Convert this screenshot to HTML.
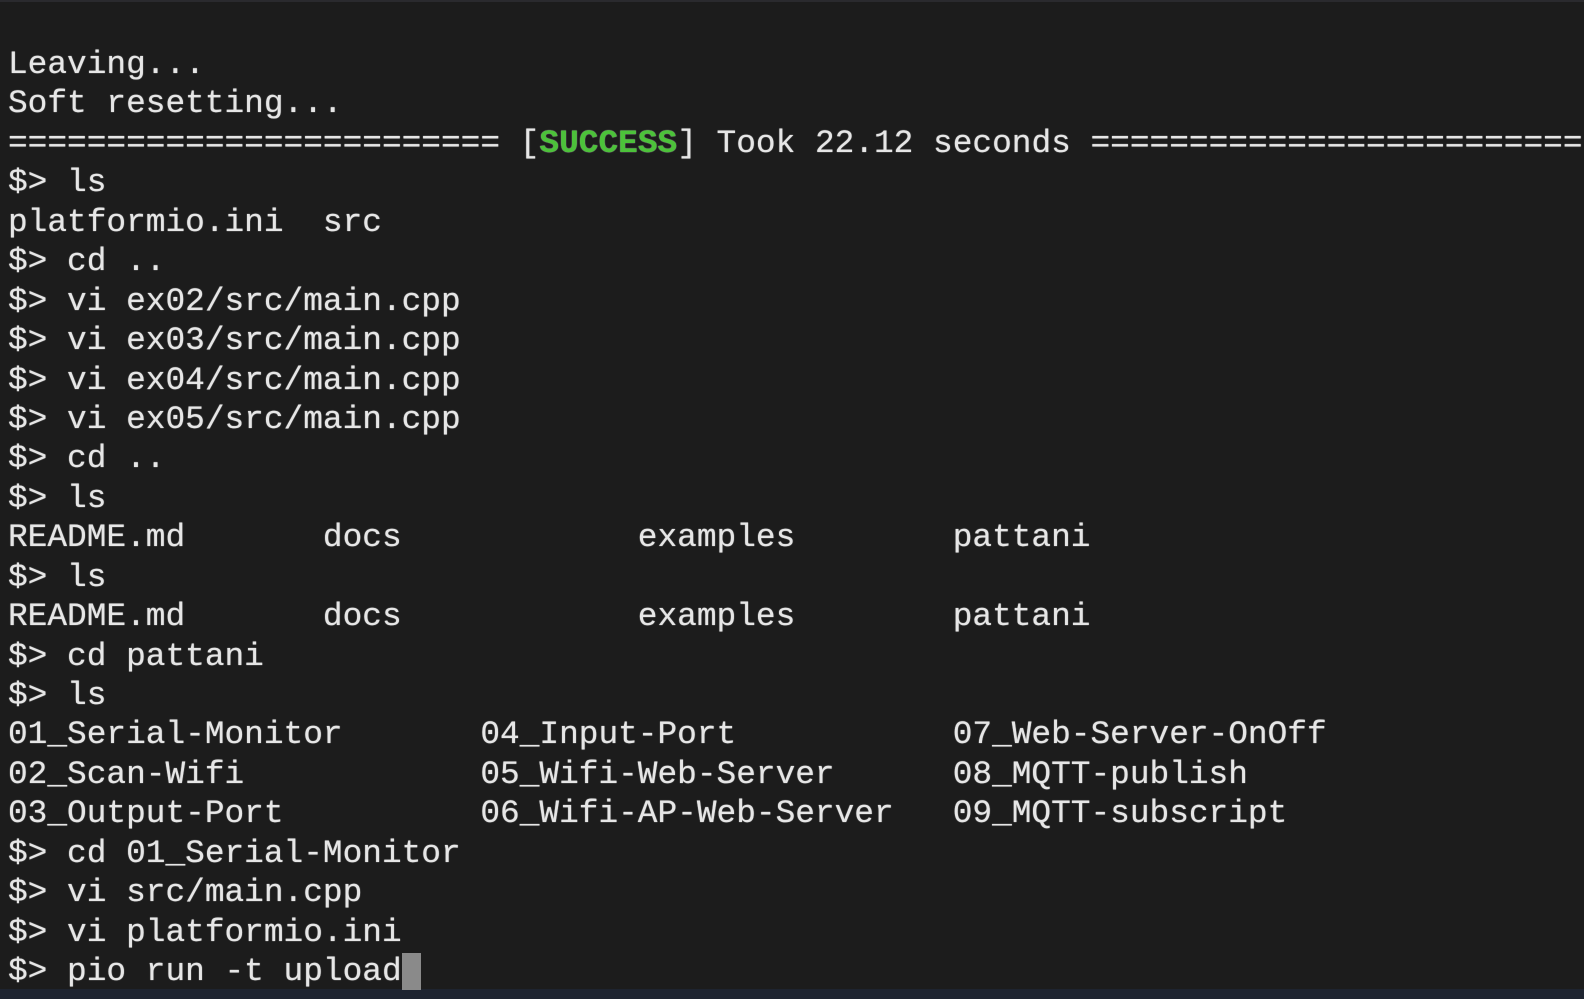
<!DOCTYPE html>
<html><head><meta charset="utf-8"><style>
html,body{margin:0;padding:0;width:1584px;height:999px;overflow:hidden;background:#1c1c1c;}
.t{position:absolute;left:0;top:0;width:1584px;height:990px;background:#1c1c1c;border-top:2px solid #2a2a2e;box-sizing:border-box}
.b{position:absolute;left:0;top:989px;width:1584px;height:10px;background:#1e2430}
.p{position:absolute;left:8px;top:45px;margin:0;font-family:"Liberation Mono",monospace;font-size:32.8px;color:#e6e6e6;text-shadow:0 0 1px #ccc;}
.p div{height:39.45px;line-height:39px;white-space:pre;overflow:visible}
.g{color:#4cc23a;font-weight:bold}
.c{background:#8a8a8a;color:#8a8a8a}
</style></head><body>
<div class="t"></div><div class="b"></div>
<div class="p">
<div>Leaving...</div>
<div>Soft resetting...</div>
<div>========================= [<span class="g">SUCCESS</span>] Took 22.12 seconds =========================</div>
<div>$&gt; ls</div>
<div>platformio.ini  src</div>
<div>$&gt; cd ..</div>
<div>$&gt; vi ex02/src/main.cpp</div>
<div>$&gt; vi ex03/src/main.cpp</div>
<div>$&gt; vi ex04/src/main.cpp</div>
<div>$&gt; vi ex05/src/main.cpp</div>
<div>$&gt; cd ..</div>
<div>$&gt; ls</div>
<div>README.md       docs            examples        pattani</div>
<div>$&gt; ls</div>
<div>README.md       docs            examples        pattani</div>
<div>$&gt; cd pattani</div>
<div>$&gt; ls</div>
<div>01_Serial-Monitor       04_Input-Port           07_Web-Server-OnOff</div>
<div>02_Scan-Wifi            05_Wifi-Web-Server      08_MQTT-publish</div>
<div>03_Output-Port          06_Wifi-AP-Web-Server   09_MQTT-subscript</div>
<div>$&gt; cd 01_Serial-Monitor</div>
<div>$&gt; vi src/main.cpp</div>
<div>$&gt; vi platformio.ini</div>
<div>$&gt; pio run -t upload<span class="c"> </span></div>
</div>
</body></html>
